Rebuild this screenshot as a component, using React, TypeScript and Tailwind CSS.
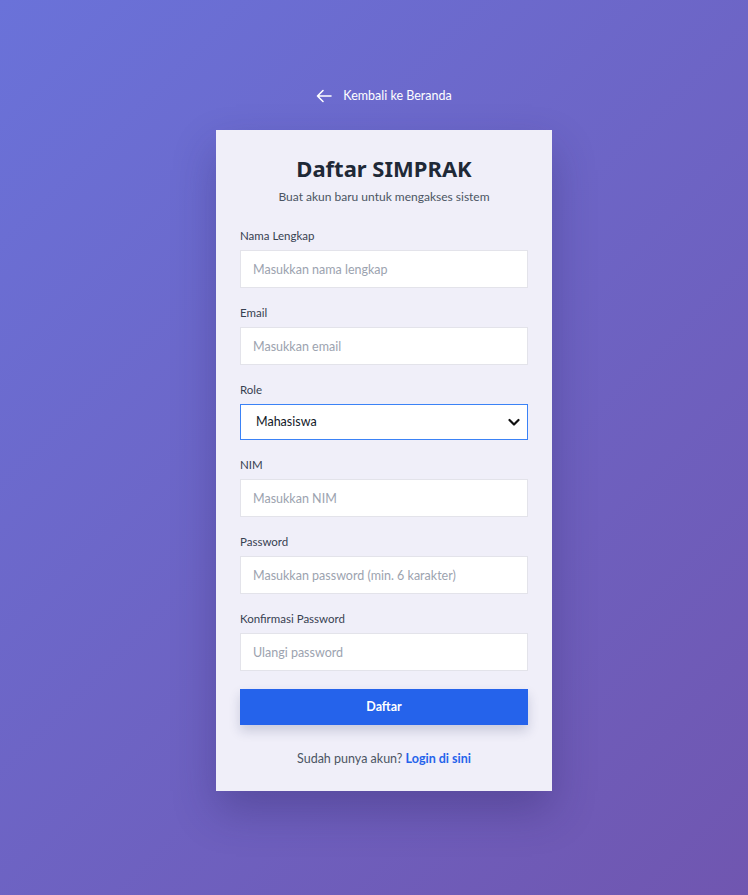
import React from "react";

const font = { fontFamily: 'Lato, "Noto Sans", Arial, sans-serif' };
const titleFont = { fontFamily: '"Noto Sans", Arial, sans-serif' };

function Field({ label, placeholder }: { label: string; placeholder: string }) {
  return (
    <div className="flex flex-col">
      <label className="text-[11.5px] leading-[16px] text-[#374151] mb-[6px]">{label}</label>
      <input
        className="h-[38px] w-full bg-white border border-[#e3e3ea] px-[12px] text-[12.5px] text-[#111827] placeholder:text-[#9ca3af] outline-none"
        placeholder={placeholder}
        style={font}
      />
    </div>
  );
}

export default function App() {
  return (
    <div
      className="min-h-[895px] w-full pl-[20px] flex flex-col items-center bg-[linear-gradient(135deg,#6a72d9_0%,#7056b0_100%)]"
      style={font}
    >
      <a className="mt-[86px] flex items-center gap-[11px] text-white text-[12.5px] leading-[20px] h-[20px]" href="#">
        <svg width="16" height="14" viewBox="0 0 16 14" fill="none" stroke="white" strokeWidth="1.6" strokeLinecap="round" strokeLinejoin="round">
          <path d="M15 7H1.5M7 1.5L1.5 7L7 12.5" />
        </svg>
        <span>Kembali ke Beranda</span>
      </a>
      <div className="mt-[24px] w-[336px] bg-[#f0eff9] px-[24px] pt-[24px] pb-[22px] shadow-[0_20px_40px_rgba(40,30,90,0.3)]">
        <h1 className="text-center text-[22px] leading-[28px] font-bold text-[#1f2937]" style={titleFont}>Daftar SIMPRAK</h1>
        <p className="mt-[5px] text-center text-[12px] leading-[20px] text-[#4b5563]">Buat akun baru untuk mengakses sistem</p>
        <div className="mt-[21px] flex flex-col gap-[17px]">
          <Field label="Nama Lengkap" placeholder="Masukkan nama lengkap" />
          <Field label="Email" placeholder="Masukkan email" />
          <div className="flex flex-col">
            <label className="text-[11.5px] leading-[16px] text-[#374151] mb-[6px]">Role</label>
            <div className="h-[36px] w-full bg-white border border-[#3b82f6] pl-[15px] pr-[6px] flex items-center justify-between text-[12.5px] text-[#111827]">
              <span>Mahasiswa</span>
              <svg width="14" height="14" viewBox="0 0 14 14" fill="none" stroke="#111" strokeWidth="2.2" strokeLinecap="round" strokeLinejoin="round">
                <path d="M2.5 5L7 9.5L11.5 5" />
              </svg>
            </div>
          </div>
          <Field label="NIM" placeholder="Masukkan NIM" />
          <Field label="Password" placeholder="Masukkan password (min. 6 karakter)" />
          <Field label="Konfirmasi Password" placeholder="Ulangi password" />
        </div>
        <button className="mt-[18px] h-[36px] w-full bg-[#2563eb] text-white text-[12.5px] font-bold shadow-[0_6px_12px_rgba(30,40,90,0.18)]">
          Daftar
        </button>
        <p className="mt-[24px] text-center text-[12.5px] leading-[20px] text-[#4b5563]">
          Sudah punya akun? <a href="#" className="text-[#2563eb] font-bold">Login di sini</a>
        </p>
      </div>
    </div>
  );
}
